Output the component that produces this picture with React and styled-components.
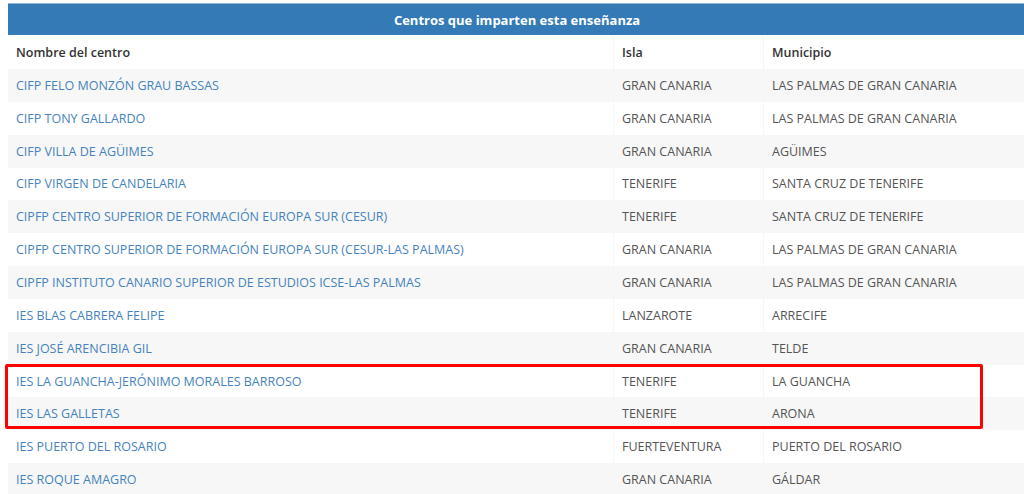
import React from "react";
import styled, { createGlobalStyle } from "styled-components";

const GlobalStyle = createGlobalStyle`
  html, body {
    margin: 0;
    padding: 0;
    background: #fff;
    overflow: hidden;
  }
  body {
    font-family: "Open Sans", "Liberation Sans", sans-serif;
  }
`;

const Page = styled.div`
  padding: 3px 0 0 8px;
  width: 1040px;
  position: relative;
`;

const Table = styled.table`
  width: 1018px;
  border-collapse: collapse;
  font-size: 12.5px;
  color: #555;
`;

const Caption = styled.th`
  background: #337ab7;
  border-top: 1px solid #8fb8db;
  color: #fff;
  font-weight: 700;
  font-size: 13px;
  height: 31px;
  padding: 0;
  text-align: center;
`;

const HeadCell = styled.th`
  text-align: left;
  font-weight: 600;
  color: #333;
  height: 34px;
  padding: 0 8px;
  border-left: ${(p) => (p.$first ? "none" : "1px solid #f6f6f6")};
  width: ${(p) => p.$w || "auto"};
`;

const Row = styled.tr`
  background: ${(p) => (p.$striped ? "#f7f7f7" : "#fff")};
`;

const Cell = styled.td`
  height: 32.85px;
  padding: 0 8px;
  border-left: ${(p) => (p.$first ? "none" : "1px solid #f6f6f6")};
  white-space: nowrap;
`;

const Link = styled.a`
  color: #4683bd;
  text-decoration: none;
`;

const Highlight = styled.div`
  position: absolute;
  left: 5px;
  top: 364px;
  width: 972px;
  height: 59px;
  border: 3px solid #ff0000;
  border-radius: 2px;
  pointer-events: none;
`;

const centros = [
  ["CIFP FELO MONZÓN GRAU BASSAS", "GRAN CANARIA", "LAS PALMAS DE GRAN CANARIA"],
  ["CIFP TONY GALLARDO", "GRAN CANARIA", "LAS PALMAS DE GRAN CANARIA"],
  ["CIFP VILLA DE AGÜIMES", "GRAN CANARIA", "AGÜIMES"],
  ["CIFP VIRGEN DE CANDELARIA", "TENERIFE", "SANTA CRUZ DE TENERIFE"],
  ["CIPFP CENTRO SUPERIOR DE FORMACIÓN EUROPA SUR (CESUR)", "TENERIFE", "SANTA CRUZ DE TENERIFE"],
  ["CIPFP CENTRO SUPERIOR DE FORMACIÓN EUROPA SUR (CESUR-LAS PALMAS)", "GRAN CANARIA", "LAS PALMAS DE GRAN CANARIA"],
  ["CIPFP INSTITUTO CANARIO SUPERIOR DE ESTUDIOS ICSE-LAS PALMAS", "GRAN CANARIA", "LAS PALMAS DE GRAN CANARIA"],
  ["IES BLAS CABRERA FELIPE", "LANZAROTE", "ARRECIFE"],
  ["IES JOSÉ ARENCIBIA GIL", "GRAN CANARIA", "TELDE"],
  ["IES LA GUANCHA-JERÓNIMO MORALES BARROSO", "TENERIFE", "LA GUANCHA"],
  ["IES LAS GALLETAS", "TENERIFE", "ARONA"],
  ["IES PUERTO DEL ROSARIO", "FUERTEVENTURA", "PUERTO DEL ROSARIO"],
  ["IES ROQUE AMAGRO", "GRAN CANARIA", "GÁLDAR"],
];

const App = () => {
  return (
    <>
      <GlobalStyle />
      <Page>
        <Table>
          <thead>
            <tr>
              <Caption colSpan={3}>Centros que imparten esta enseñanza</Caption>
            </tr>
            <tr>
              <HeadCell $first $w="589px">Nombre del centro</HeadCell>
              <HeadCell $w="133px">Isla</HeadCell>
              <HeadCell>Municipio</HeadCell>
            </tr>
          </thead>
          <tbody>
            {centros.map(([nombre, isla, municipio], i) => (
              <Row key={nombre} $striped={i % 2 === 0}>
                <Cell $first>
                  <Link href="#">{nombre}</Link>
                </Cell>
                <Cell>{isla}</Cell>
                <Cell>{municipio}</Cell>
              </Row>
            ))}
          </tbody>
        </Table>
        <Highlight />
      </Page>
    </>
  );
};

export default App;
